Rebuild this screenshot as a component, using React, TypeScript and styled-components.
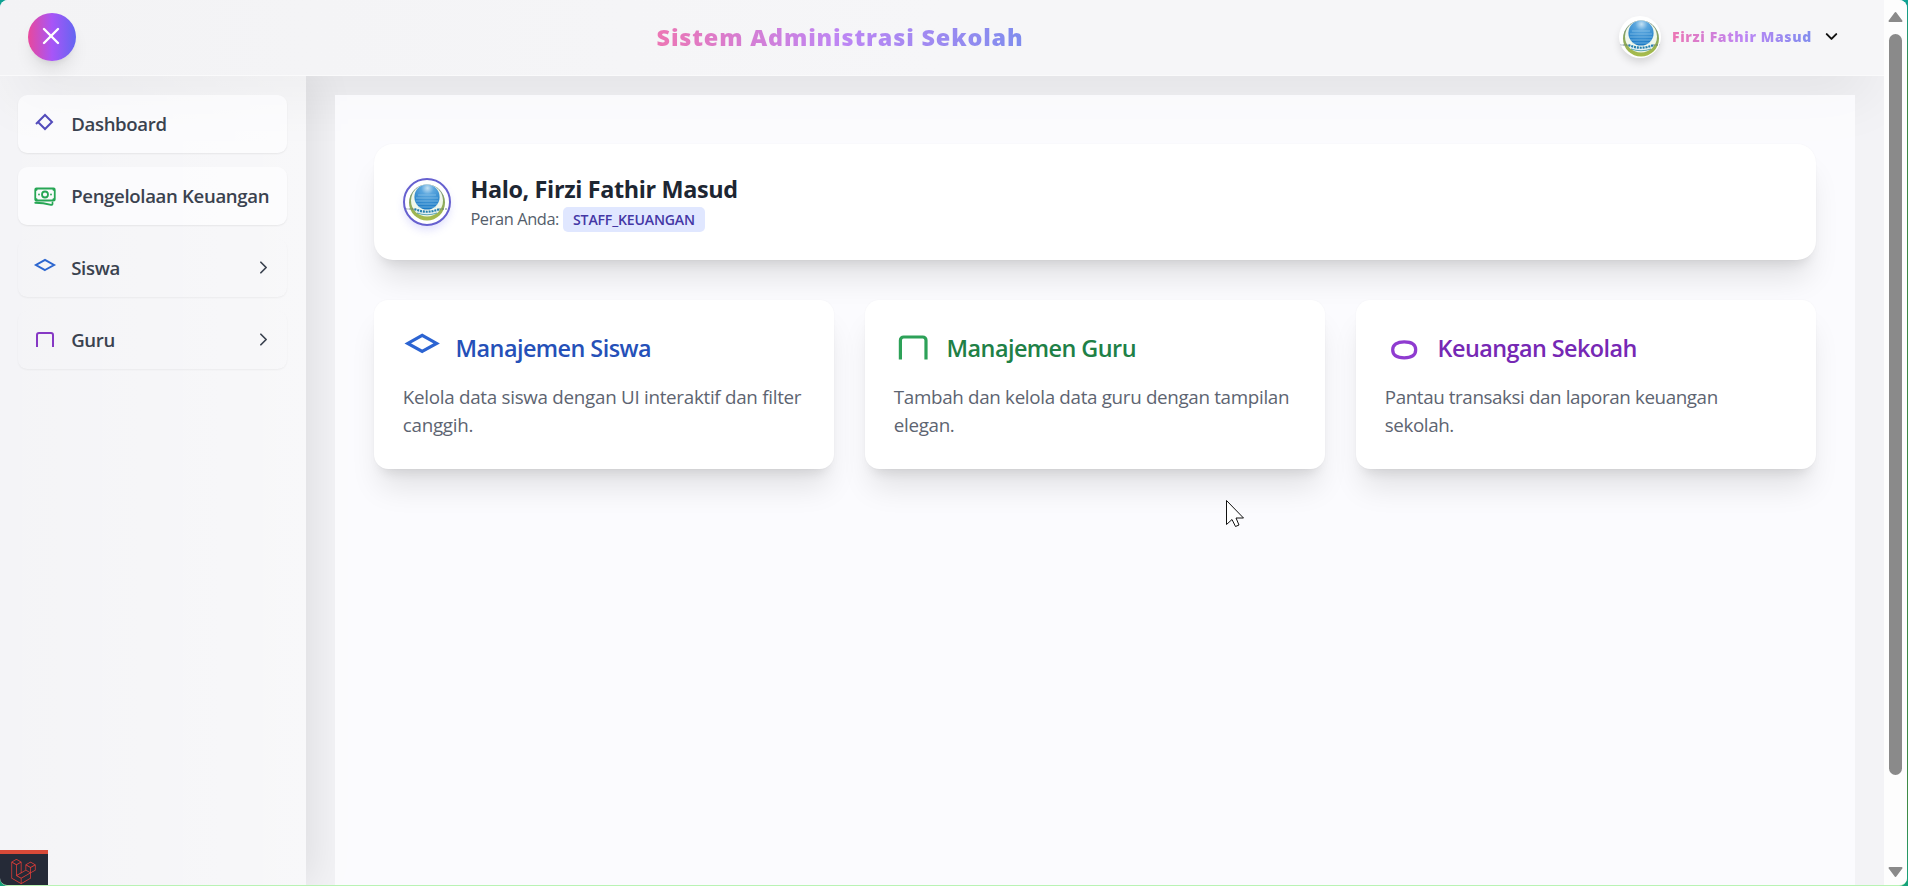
import React from "react";
import styled, { createGlobalStyle, css } from "styled-components";
import { HiOutlineBanknotes } from "react-icons/hi2";
import { SiLaravel } from "react-icons/si";
import { ChevronDown, ChevronRight, X } from "lucide-react";

const GlobalStyle = createGlobalStyle`
  *, *::before, *::after { box-sizing: border-box; }
  body {
    margin: 0;
    overflow: hidden;
    background: linear-gradient(180deg, #0ea294 0%, #3d8b46 8%, #3d8b46 92%, #14a37c 100%);
    font-family: "Open Sans", "Noto Sans", sans-serif;
  }
  h1, h2, h3, p { margin: 0; }
`;

const Screen = styled.div`
  position: relative;
  height: 886px;
  padding-right: 1px;
`;

const Window = styled.div`
  display: flex;
  height: 886px;
  overflow: hidden;
  border-radius: 8px;
  border-bottom: 1px solid #b9f3b4;
  background: #f3f3f6;
`;

const Page = styled.div`
  flex: 1;
  display: flex;
  flex-direction: column;
  min-width: 0;
  overflow: hidden;
  isolation: isolate;
`;

const Header = styled.header`
  position: relative;
  flex: none;
  display: flex;
  align-items: center;
  justify-content: space-between;
  height: 76px;
  padding: 0 28px;
  padding-bottom: 2px;
  border-bottom: 1px solid #fafafb;
  background: linear-gradient(90deg, #f3f3f5, #f6f6f8 50%, #f6f6f8);
  box-shadow: 0 30px 60px -14px rgba(0, 0, 0, 0.085);
`;

const CloseButton = styled.button`
  display: grid;
  place-items: center;
  width: 48px;
  height: 48px;
  padding: 0 2px 1px 0;
  border: 0;
  border-radius: 50%;
  color: #fff;
  background: linear-gradient(90deg, #e8489c, #a855f7 50%, #6366f1);
  box-shadow: 0 12px 18px -4px rgba(0, 0, 0, 0.1), 0 5px 7px -5px rgba(0, 0, 0, 0.12);
`;

const gradientText = css`
  color: transparent;
  background: linear-gradient(90deg, #ec76b4, #be86f4 50%, #808dee);
  background-clip: text;
  -webkit-background-clip: text;
`;

const AppTitle = styled.h1`
  ${gradientText}
  font-size: 23.4px;
  font-weight: 800;
  line-height: 34px;
  letter-spacing: 0.83px;
  white-space: nowrap;
`;

const UserMenu = styled.div`
  display: flex;
  align-items: center;
  width: 252px;
  padding-left: 15px;
`;

const UserName = styled.span`
  ${gradientText}
  width: 141px;
  margin: 0 9px 0 11px;
  font-size: 14px;
  font-weight: 800;
  line-height: 20px;
  letter-spacing: 0.62px;
  white-space: nowrap;
`;

const Avatar = styled.div<{ $size: number; $ring?: boolean }>`
  flex: none;
  display: grid;
  place-items: center;
  width: ${(p) => p.$size}px;
  height: ${(p) => p.$size}px;
  overflow: hidden;
  border: ${(p) => (p.$ring ? "2px solid #6660cf" : "0")};
  border-radius: 50%;
  background: #fff;
  box-shadow: 0 5px 8px -1px ${(p) => (p.$ring ? "rgba(99, 102, 241, 0.2)" : "rgba(0, 0, 0, 0.14)")};
`;

const Body = styled.div`
  flex: 1;
  display: flex;
  min-height: 0;
`;

const Sidebar = styled.nav`
  flex: none;
  display: flex;
  flex-direction: column;
  gap: 14.4px;
  width: 306px;
  padding: 19px 19px 0 18px;
  background: linear-gradient(90deg, rgba(255, 255, 255, 0.1), rgba(255, 255, 255, 0.42));
  box-shadow: 6px 0 40px rgba(0, 0, 0, 0.095);
  clip-path: inset(0 -80px 0 0);
`;

const NavItem = styled.a<{ $solid?: boolean }>`
  display: flex;
  align-items: center;
  gap: 14px;
  height: 57.6px;
  padding: 0 13.4px 0 15.2px;
  border-radius: 9.6px;
  color: #3a424f;
  font-size: 18.6px;
  font-weight: 600;
  letter-spacing: -0.34px;
  white-space: nowrap;
  background: ${(p) => (p.$solid ? "rgba(253, 253, 255, 0.68)" : "rgba(255, 255, 255, 0.08)")};
  box-shadow: 0 1px 2px rgba(0, 0, 0, ${(p) => (p.$solid ? 0.07 : 0.05)});
`;

const NavLabel = styled.span`
  flex: 1;
`;

const LineIcon = styled.svg<{ $size: number; $color: string }>`
  flex: none;
  display: block;
  width: ${(p) => p.$size}px;
  height: ${(p) => p.$size}px;
  fill: none;
  stroke: ${(p) => p.$color};
  stroke-width: 2;
`;

const Money = styled(HiOutlineBanknotes)`
  flex: none;
  width: 24px;
  height: 24px;
  color: #27a655;

  path {
    stroke-width: 1.8;
  }
`;

const Main = styled.main`
  flex: 1;
  min-width: 0;
  padding: 19px 29px 0;
`;

const Panel = styled.section`
  position: relative;
  z-index: 1;
  display: flex;
  flex-direction: column;
  gap: 40px;
  height: 100%;
  padding: 49px 39px 0;
  background: rgba(253, 253, 255, 0.82);
`;

const card = css`
  padding: 28.8px;
  background: #fff;
  box-shadow: 0 24px 30px -6px rgba(0, 0, 0, 0.1), 0 10px 12px -7px rgba(0, 0, 0, 0.1),
    0 0 2px rgba(0, 0, 0, 0.04);
`;

const WelcomeCard = styled.div`
  ${card}
  display: flex;
  align-items: center;
  gap: 19.6px;
  height: 116px;
  border-radius: 19px;
`;

const Greeting = styled.h2`
  color: #1d2632;
  font-size: 23.4px;
  font-weight: 700;
  line-height: 33.6px;
  letter-spacing: -0.36px;
`;

const RoleLine = styled.p`
  display: flex;
  align-items: center;
  gap: 4px;
  height: 24px;
  color: #555e6b;
  font-size: 16.4px;
  letter-spacing: -0.4px;
`;

const RoleBadge = styled.span`
  height: 25px;
  margin-top: 1px;
  padding: 0 10px;
  border-radius: 5px;
  color: #4437a5;
  background: #e0e7ff;
  font-size: 14.1px;
  font-weight: 600;
  line-height: 25px;
  letter-spacing: -0.18px;
`;

const CardGrid = styled.div`
  display: grid;
  grid-template-columns: repeat(3, 1fr);
  gap: 31px;
`;

const FeatureCard = styled.article`
  ${card}
  height: 168.6px;
  border-radius: 14.4px;
`;

const FeatureHead = styled.div`
  display: flex;
  align-items: center;
  gap: 14.4px;
  margin-bottom: 16px;
`;

const FeatureTitle = styled.h3<{ $color: string }>`
  padding-top: 2px;
  color: ${(p) => p.$color};
  font-size: 23.4px;
  font-weight: 600;
  line-height: 33px;
  letter-spacing: -0.55px;
`;

const FeatureText = styled.p<{ $tracking: number }>`
  color: #5d6471;
  font-size: 18.8px;
  line-height: 28.2px;
  letter-spacing: ${(p) => p.$tracking}px;
`;

const Scrollbar = styled.div`
  flex: none;
  display: flex;
  flex-direction: column;
  align-items: center;
  width: 23px;
  padding: 11px 0 7px;
  background: #fdfdfd;
`;

const ScrollThumb = styled.div`
  width: 13px;
  height: 741px;
  margin: 11px 0 auto;
  border-radius: 7px;
  background: #8a8a8a;
`;

const ScrollArrow = styled.svg<{ $down?: boolean }>`
  width: 15px;
  height: 12px;
  fill: #8a8a8a;
  stroke: #8a8a8a;
  stroke-width: 2;
  stroke-linejoin: round;
  transform: ${(p) => (p.$down ? "rotate(180deg)" : "none")};
`;

const DebugBadge = styled.div`
  position: absolute;
  left: 0;
  bottom: 1px;
  display: grid;
  place-items: center;
  width: 48px;
  height: 35px;
  padding: 3px 1px 0 0;
  border-top: 4px solid #d84a38;
  border-bottom-left-radius: 7px;
  color: #dc3d38;
  background: #252a37;
`;

const Pointer = styled.svg`
  position: absolute;
  left: 1225px;
  top: 499px;
  width: 20px;
  height: 30px;
`;

const paths = {
  home: "M3 12l2-2 7-7 7 7-7 7-7-7",
  student: "M12 14l9-5-9-5-9 5 9 5z",
  teacher: "M4 19V7a2 2 0 012-2h12a2 2 0 012 2v12",
  finance: "M12 8c-4.4 0-7.2 1.7-7.2 5s2.8 5 7.2 5 7.2-1.7 7.2-5-2.8-5-7.2-5z",
};

function Icon({ name, size, color }: { name: keyof typeof paths; size: number; color: string }) {
  return (
    <LineIcon viewBox="0 0 24 24" $size={size} $color={color}>
      <path d={paths[name]} />
    </LineIcon>
  );
}

function Emblem() {
  return (
    <svg width="44" height="44" viewBox="-22 -22 44 44">
      <defs>
        <radialGradient id="globe" cx="0.52" cy="0.15" r="0.85">
          <stop offset="0" stopColor="#c4e1f3" />
          <stop offset="0.3" stopColor="#5aa6de" />
          <stop offset="1" stopColor="#1878c4" />
        </radialGradient>
        <linearGradient id="leaf" x1="0" y1="0" x2="0" y2="1">
          <stop offset="0" stopColor="#6f8a86" />
          <stop offset="0.5" stopColor="#8ba95c" />
          <stop offset="1" stopColor="#a9bd4b" />
        </linearGradient>
      </defs>
      <circle cy="0.5" r="18" fill="url(#leaf)" />
      <circle cy="-1.5" r="16" fill="#f0f7ea" />
      <circle cy="-5" r="12.600" fill="url(#globe)" />
      <path d="M-9-7H9M-11-4H11M-11.500-1H11.500M-11 2H11M-9 5H9" stroke="#a5d2ee" strokeWidth="0.8" opacity="0.7" />
      <path d="M-13 5.500Q0 12 13 5.500L11 10.500Q0 15-11 10.500Z" fill="#e4f1f2" />
      <path d="M-12.500 7Q0 12.500 12.500 7" fill="none" stroke="#247fae" strokeWidth="2.200" strokeDasharray="2 0.900" />
      <path d="M-10 11Q0 14.500 10 11" fill="none" stroke="#3c93a8" strokeWidth="0.8" />
      <path d="M-21.500 7H-12M12 7H21.500" stroke="#5b7478" strokeWidth="0.9" strokeDasharray="2 1" />
    </svg>
  );
}

const features = [
  { icon: "student", stroke: "#2c64d2", color: "#2550b8", title: "Manajemen Siswa", text: "Kelola data siswa dengan UI interaktif dan filter canggih.", tracking: -0.28 },
  { icon: "teacher", stroke: "#2da158", color: "#208046", title: "Manajemen Guru", text: "Tambah dan kelola data guru dengan tampilan elegan.", tracking: -0.32 },
  { icon: "finance", stroke: "#8f3bd0", color: "#7628b4", title: "Keuangan Sekolah", text: "Pantau transaksi dan laporan keuangan sekolah.", tracking: -0.4 },
] as const;

export default function App() {
  return (
    <Screen>
      <GlobalStyle />
      <Window>
        <Page>
          <Header>
            <CloseButton aria-label="Tutup menu">
              <X size={28} strokeWidth={2.1} />
            </CloseButton>
            <AppTitle>Sistem Administrasi Sekolah</AppTitle>
            <UserMenu>
              <Avatar $size={42}>
                <Emblem />
              </Avatar>
              <UserName>Firzi Fathir Masud</UserName>
              <ChevronDown size={19} strokeWidth={2.5} color="#111" />
            </UserMenu>
          </Header>
          <Body>
            <Sidebar>
              <NavItem $solid>
                <Icon name="home" size={24} color="#524bbb" />
                <NavLabel>Dashboard</NavLabel>
              </NavItem>
              <NavItem $solid>
                <Money />
                <NavLabel>Pengelolaan Keuangan</NavLabel>
              </NavItem>
              <NavItem>
                <Icon name="student" size={24} color="#2c66cf" />
                <NavLabel>Siswa</NavLabel>
                <ChevronRight size={21} strokeWidth={2} />
              </NavItem>
              <NavItem>
                <Icon name="teacher" size={24} color="#8638c4" />
                <NavLabel>Guru</NavLabel>
                <ChevronRight size={21} strokeWidth={2} />
              </NavItem>
            </Sidebar>
            <Main>
              <Panel>
                <WelcomeCard>
                  <Avatar $size={48} $ring>
                    <Emblem />
                  </Avatar>
                  <div>
                    <Greeting>Halo, Firzi Fathir Masud</Greeting>
                    <RoleLine>
                      Peran Anda: <RoleBadge>STAFF_KEUANGAN</RoleBadge>
                    </RoleLine>
                  </div>
                </WelcomeCard>
                <CardGrid>
                  {features.map((f) => (
                    <FeatureCard key={f.title}>
                      <FeatureHead>
                        <Icon name={f.icon} size={38.4} color={f.stroke} />
                        <FeatureTitle $color={f.color}>{f.title}</FeatureTitle>
                      </FeatureHead>
                      <FeatureText $tracking={f.tracking}>{f.text}</FeatureText>
                    </FeatureCard>
                  ))}
                </CardGrid>
              </Panel>
            </Main>
          </Body>
        </Page>
        <Scrollbar>
          <ScrollArrow viewBox="0 0 15 12">
            <path d="M7.500 2L13.500 10H1.500Z" />
          </ScrollArrow>
          <ScrollThumb />
          <ScrollArrow $down viewBox="0 0 15 12">
            <path d="M7.500 2L13.500 10H1.500Z" />
          </ScrollArrow>
        </Scrollbar>
      </Window>
      <DebugBadge>
        <SiLaravel size={25} />
      </DebugBadge>
      <Pointer viewBox="0 0 20 30">
        <path d="M1.500 1.500V25.500L7 20.500L10.500 27.500L14 26L11 19H18.500Z" fill="#fff" stroke="#111" strokeWidth="1" />
      </Pointer>
    </Screen>
  );
}
